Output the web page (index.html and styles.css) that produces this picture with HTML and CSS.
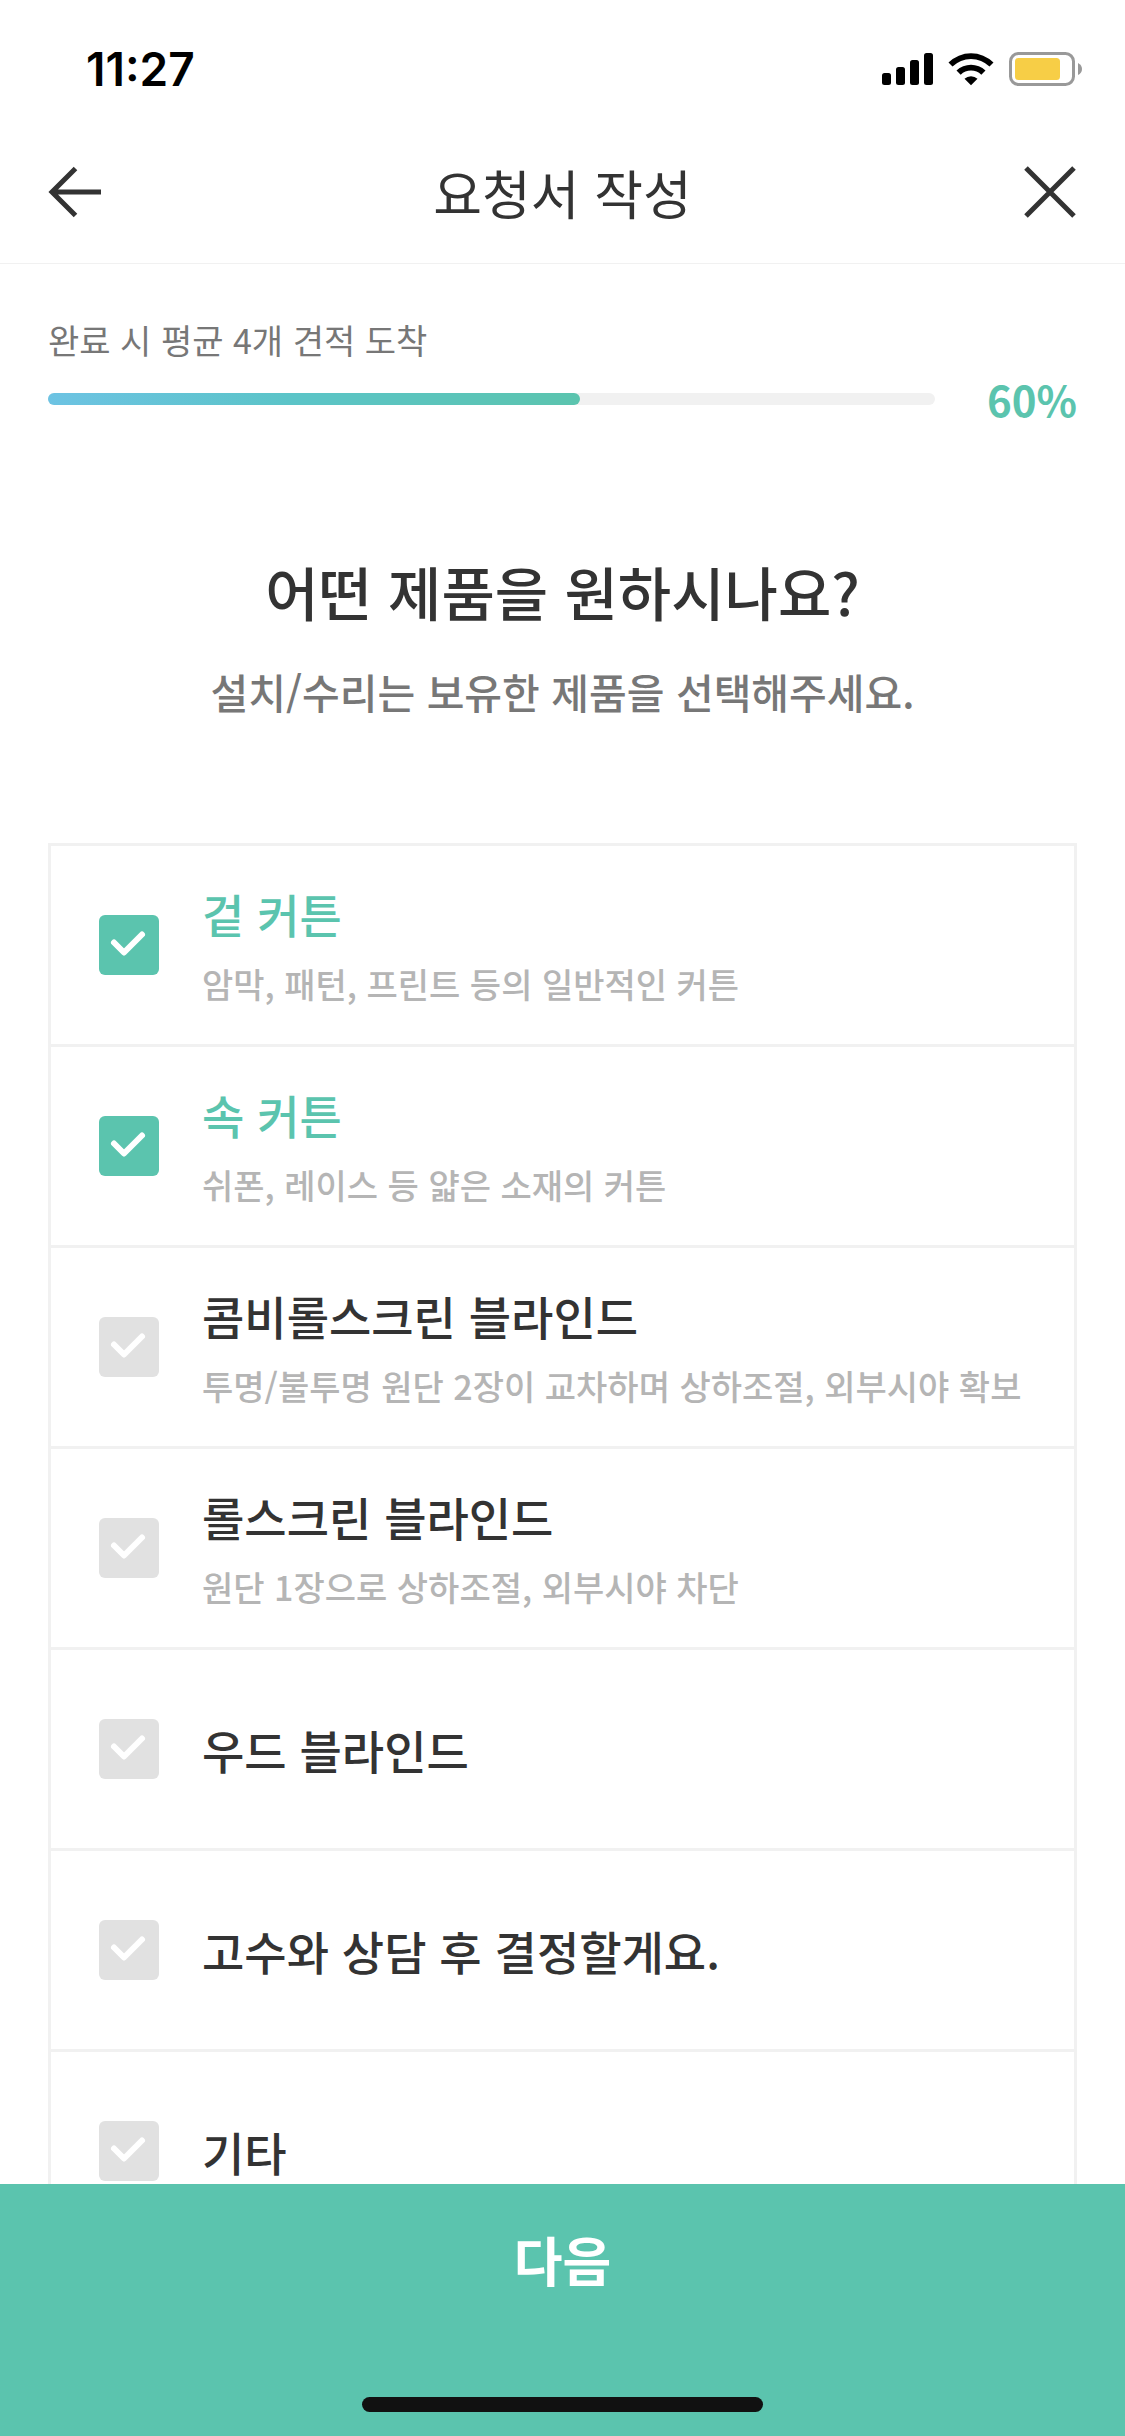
FILE: index.html
```html
<!DOCTYPE html>
<html lang="ko">
<head>
<meta charset="utf-8">
<meta name="viewport" content="width=device-width">
<title>요청서 작성</title>
<link rel="stylesheet" href="styles.css">
</head>
<body>
<svg class="symbols" aria-hidden="true">
  <symbol id="check" viewBox="0 0 60 60">
    <path d="M15 27.500 L25 37.500 L43 19.500" fill="none" stroke="#fff" stroke-width="6" stroke-linecap="round" stroke-linejoin="round"/>
  </symbol>
</svg>

<div class="status">
  <time class="clock">11:27</time>
  <div class="indicators">
    <svg width="51" height="34" viewBox="0 0 51 34" aria-hidden="true">
      <rect x="0" y="21" width="9" height="12" rx="2.500"/>
      <rect x="14" y="15" width="9" height="18" rx="2.500"/>
      <rect x="28" y="8" width="9" height="25" rx="2.500"/>
      <rect x="42" y="1" width="9" height="32" rx="2.500"/>
    </svg>
    <svg width="46" height="34" viewBox="0 0 46 34" aria-hidden="true">
      <path d="M0.500 10.500 A32 32 0 0 1 45.500 10.500 L41.500 14.500 A26.500 26.500 0 0 0 4.500 14.500 Z"/>
      <path d="M8.500 18.500 A21 21 0 0 1 37.500 18.500 L33.300 22.700 A15 15 0 0 0 12.700 22.700 Z"/>
      <path d="M16.500 26.700 A9.500 9.500 0 0 1 29.500 26.700 L23 33.300 Z"/>
    </svg>
    <svg width="74" height="34" viewBox="0 0 74 34" aria-hidden="true">
      <rect x="1.500" y="1.500" width="63" height="31" rx="8" fill="none" stroke="#999" stroke-width="3"/>
      <rect x="6" y="6" width="45" height="22" rx="3.500" fill="#f7ce46"/>
      <path d="M69 11 Q73 13 73 17 Q73 21 69 23 Z" fill="#999"/>
    </svg>
  </div>
</div>

<header class="bar">
  <button class="icon-button" type="button" aria-label="뒤로">
    <svg width="54" height="54" viewBox="0 0 54 54"><path d="M27.500 3.500 L4 27 L27.500 50.500 M4 27 H53" fill="none" stroke="#333" stroke-width="5"/></svg>
  </button>
  <h1 class="bar-title">요청서 작성</h1>
  <button class="icon-button" type="button" aria-label="닫기">
    <svg width="54" height="54" viewBox="0 0 54 54"><path d="M3 3 L51 51 M51 3 L3 51" fill="none" stroke="#333" stroke-width="5"/></svg>
  </button>
</header>

<main class="content">
  <section class="progress">
    <p class="progress-label">완료 시 평균 4개 견적 도착</p>
    <div class="progress-row">
      <div class="track" role="progressbar" aria-label="진행률" aria-valuenow="60" aria-valuemin="0" aria-valuemax="100"><div class="fill" style="width:60%"></div></div>
      <span class="percent">60%</span>
    </div>
  </section>

  <section class="question">
    <h2 class="question-title">어떤 제품을 원하시나요?</h2>
    <p class="question-hint">설치/수리는 보유한 제품을 선택해주세요.</p>
  </section>

  <div class="options">
    <label class="option"><span class="tick"><input type="checkbox" checked><svg><use href="#check"/></svg></span><span class="texts"><span class="name">겉 커튼</span><span class="desc">암막, 패턴, 프린트 등의 일반적인 커튼</span></span></label>
    <label class="option"><span class="tick"><input type="checkbox" checked><svg><use href="#check"/></svg></span><span class="texts"><span class="name">속 커튼</span><span class="desc">쉬폰, 레이스 등 얇은 소재의 커튼</span></span></label>
    <label class="option"><span class="tick"><input type="checkbox"><svg><use href="#check"/></svg></span><span class="texts"><span class="name">콤비롤스크린 블라인드</span><span class="desc">투명/불투명 원단 2장이 교차하며 상하조절, 외부시야 확보</span></span></label>
    <label class="option"><span class="tick"><input type="checkbox"><svg><use href="#check"/></svg></span><span class="texts"><span class="name">롤스크린 블라인드</span><span class="desc">원단 1장으로 상하조절, 외부시야 차단</span></span></label>
    <label class="option"><span class="tick"><input type="checkbox"><svg><use href="#check"/></svg></span><span class="texts"><span class="name">우드 블라인드</span></span></label>
    <label class="option"><span class="tick"><input type="checkbox"><svg><use href="#check"/></svg></span><span class="texts"><span class="name">고수와 상담 후 결정할게요.</span></span></label>
    <label class="option"><span class="tick"><input type="checkbox"><svg><use href="#check"/></svg></span><span class="texts"><span class="name">기타</span></span></label>
  </div>
</main>

<footer class="footer">
  <button class="next" type="button">다음</button>
  <div class="home"></div>
</footer>
</body>
</html>
```
FILE: styles.css
```css
* {
  box-sizing: border-box;
}

body {
  display: flex;
  flex-direction: column;
  height: 100vh;
  margin: 0;
  background: #fff;
  color: #333;
  font-family: "Noto Sans CJK KR", sans-serif;
}

h1, h2, p {
  margin: 0;
}

button {
  padding: 0;
  border: 0;
  background: none;
  color: inherit;
  font-family: inherit;
  cursor: pointer;
}

svg {
  display: block;
}

.symbols {
  display: none;
}

/* Status bar */
.status {
  display: flex;
  flex: none;
  align-items: center;
  justify-content: space-between;
  height: 138px;
  padding: 0 42px 0 86px;
  color: #000;
}

.clock {
  font: 600 46px/60px Inter, sans-serif;
}

.indicators {
  display: flex;
  gap: 15px;
}

/* Title bar */
.bar {
  display: flex;
  flex: none;
  align-items: center;
  justify-content: space-between;
  height: 126px;
  padding: 0 48px 18px;
  border-bottom: 1px solid #f1f1f1;
}

.bar-title {
  font-size: 53px;
  font-weight: 400;
  line-height: 80px;
}

/* Scrolling content */
.content {
  flex: 1;
  min-height: 0;
  padding: 48px 48px 0;
  overflow-y: auto;
  scrollbar-width: none;
}

.progress-label {
  color: #777;
  font-size: 34px;
  line-height: 56px;
}

.progress-row {
  display: flex;
  align-items: center;
  gap: 52px;
}

.track {
  flex: 1;
  height: 12px;
  border-radius: 6px;
  background: #f1f1f1;
}

.fill {
  height: 100%;
  border-radius: 6px;
  background: linear-gradient(90deg, #6dc3e3, #5bc4c8 45%, #5bc4ae);
}

.percent {
  color: #5bc4ae;
  font-size: 42px;
  font-weight: 700;
  line-height: 62px;
}

.question {
  padding: 117px 0 120px;
  text-align: center;
}

.question-title {
  font-size: 58px;
  font-weight: 500;
  line-height: 88px;
}

.question-hint {
  padding-top: 24px;
  color: #777;
  font-size: 41px;
  font-weight: 500;
  line-height: 64px;
}

/* Choices */
.options {
  border: 3px solid #f1f1f1;
  border-bottom: 0;
}

.option {
  display: flex;
  align-items: center;
  gap: 43px;
  min-height: 201px;
  padding: 0 48px;
  border-bottom: 3px solid #f1f1f1;
}

.tick {
  display: grid;
  flex: none;
}

.tick input {
  grid-area: 1 / 1;
  width: 60px;
  height: 60px;
  margin: 0;
  border-radius: 6px;
  background: #e1e1e1;
  appearance: none;
}

.tick input:checked {
  background: #5bc4ae;
}

.tick svg {
  grid-area: 1 / 1;
  width: 60px;
  height: 60px;
  pointer-events: none;
}

.texts {
  display: flex;
  flex-direction: column;
  gap: 8px;
  white-space: nowrap;
}

.name {
  font-size: 46px;
  font-weight: 500;
  line-height: 70px;
}

.option:has(input:checked) .name {
  color: #5bc4ae;
}

.desc {
  color: #b5b5b5;
  font-size: 34px;
  font-weight: 500;
  line-height: 56px;
}

/* Bottom action */
.footer {
  display: flex;
  flex: none;
  flex-direction: column;
  align-items: center;
  justify-content: space-between;
  padding-bottom: 24px;
  background: #5bc4ae;
}

.next {
  width: 100%;
  height: 150px;
  color: #fff;
  font-size: 53px;
  font-weight: 700;
}

.home {
  width: 401px;
  height: 15px;
  margin-top: 63px;
  border-radius: 8px;
  background: #111;
}
```
